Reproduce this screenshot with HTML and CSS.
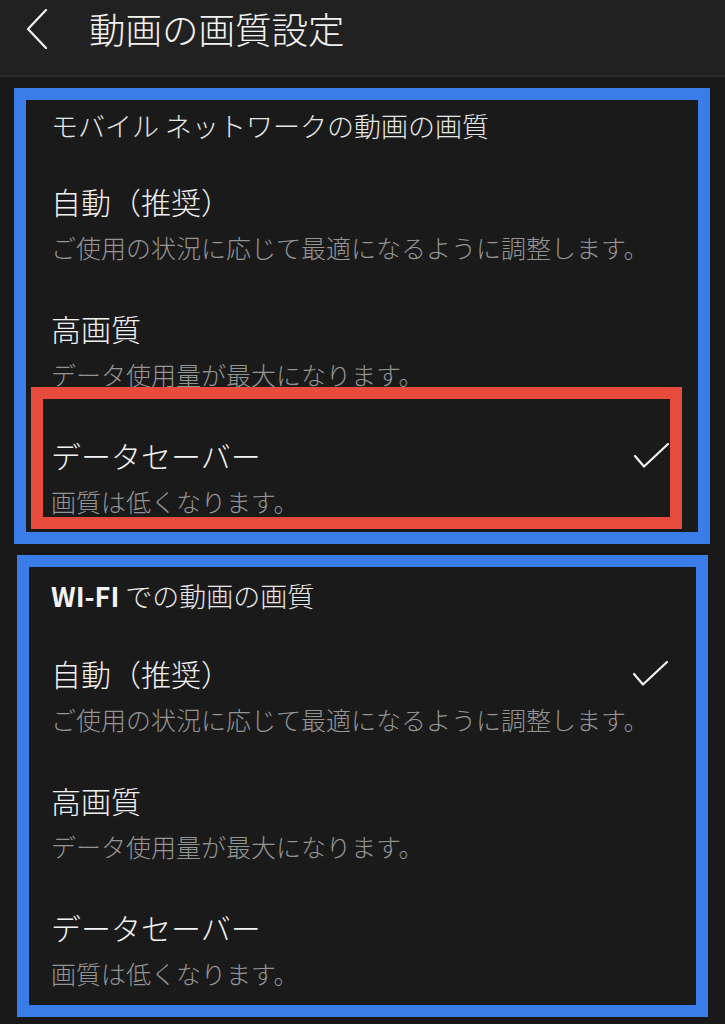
FILE: index.html
```html
<!DOCTYPE html>
<html lang="ja">
<head>
    <meta charset="UTF-8">
    <meta name="viewport" content="width=device-width, initial-scale=1.0">
    <title>動画の画質設定</title>
    <link rel="stylesheet" href="styles.css">
</head>
<body>
    <header class="topbar">
        <svg class="back" width="22" height="40" viewBox="0 0 22 40" aria-hidden="true">
            <path d="M20 1 L2 20 L20 39" fill="none" stroke="#f2f2f2" stroke-width="2.2" stroke-linecap="round" stroke-linejoin="round"/>
        </svg>
        <h1 class="page-title">動画の画質設定</h1>
    </header>

    <main>
        <section class="group group-mobile">
            <h2 class="group-title">モバイル ネットワークの動画の画質</h2>
            <ul class="options">
                <li class="option">
                    <div class="option-head"><span class="option-name">自動（推奨）</span></div>
                    <p class="option-desc">ご使用の状況に応じて最適になるように調整します。</p>
                </li>
                <li class="option">
                    <div class="option-head"><span class="option-name">高画質</span></div>
                    <p class="option-desc">データ使用量が最大になります。</p>
                </li>
                <li class="option">
                    <div class="option-head">
                        <span class="option-name">データセーバー</span>
                        <svg class="check" width="35" height="25" viewBox="0 0 35 25" aria-hidden="true">
                            <path d="M1 13 L10 23.5 L34 1" fill="none" stroke="#f2f2f2" stroke-width="2.2" stroke-linecap="round" stroke-linejoin="round"/>
                        </svg>
                    </div>
                    <p class="option-desc">画質は低くなります。</p>
                </li>
            </ul>
            <div class="highlight"></div>
        </section>

        <section class="group group-wifi">
            <h2 class="group-title"><b>WI-FI</b> での動画の画質</h2>
            <ul class="options">
                <li class="option">
                    <div class="option-head">
                        <span class="option-name">自動（推奨）</span>
                        <svg class="check" width="35" height="25" viewBox="0 0 35 25" aria-hidden="true">
                            <path d="M1 13 L10 23.5 L34 1" fill="none" stroke="#f2f2f2" stroke-width="2.2" stroke-linecap="round" stroke-linejoin="round"/>
                        </svg>
                    </div>
                    <p class="option-desc">ご使用の状況に応じて最適になるように調整します。</p>
                </li>
                <li class="option">
                    <div class="option-head"><span class="option-name">高画質</span></div>
                    <p class="option-desc">データ使用量が最大になります。</p>
                </li>
                <li class="option">
                    <div class="option-head"><span class="option-name">データセーバー</span></div>
                    <p class="option-desc">画質は低くなります。</p>
                </li>
            </ul>
        </section>
    </main>
</body>
</html>
```

FILE: styles.css
```css
* {
    box-sizing: border-box;
}
body {
    margin: 0;
    background-color: #181818;
    color: #f2f2f2;
    font-family: "Noto Sans CJK JP", "Noto Sans", sans-serif;
    font-weight: 300;
}
.topbar {
    display: flex;
    align-items: center;
    height: 77px;
    padding: 0 0 18px 26px;
    background-color: #212121;
    border-bottom: 2px solid #2c2c2c;
}
.back {
    display: block;
}
.page-title {
    margin: 0 0 0 41px;
    font-size: 36.5px;
    font-weight: 300;
    line-height: 50px;
}
.group {
    position: relative;
    background-color: #1a1a1a;
    border: 12px solid #3a7ce8;
}
.group-mobile {
    margin: 11px 15px 0 14px;
    padding: 7px 29px 14px 25px;
}
.group-wifi {
    margin: 11px 17px 0 17px;
    padding: 10px 28px 15px 22px;
}
.group-title {
    margin: 0;
    font-size: 27px;
    font-weight: 300;
    line-height: 38px;
    color: #e6e6e6;
}
.group-title b {
    font-weight: 700;
    color: #f2f2f2;
}
.options {
    list-style: none;
    margin: 0;
    padding: 0;
    display: flex;
    flex-direction: column;
    gap: 44px;
}
.group-mobile .options {
    margin-top: 36px;
}
.group-wifi .options {
    margin-top: 38px;
}
.option-head {
    display: flex;
    align-items: center;
    justify-content: space-between;
    height: 40px;
}
.option-name {
    font-size: 30px;
    line-height: 40px;
}
.option-desc {
    margin: 9px 0 0;
    font-size: 25px;
    line-height: 34px;
    color: #949494;
}
.check {
    display: block;
    margin-top: 1px;
}
.highlight {
    position: absolute;
    left: 5px;
    top: 287px;
    width: 651px;
    height: 142px;
    border: 12px solid #e64b3c;
}
```
